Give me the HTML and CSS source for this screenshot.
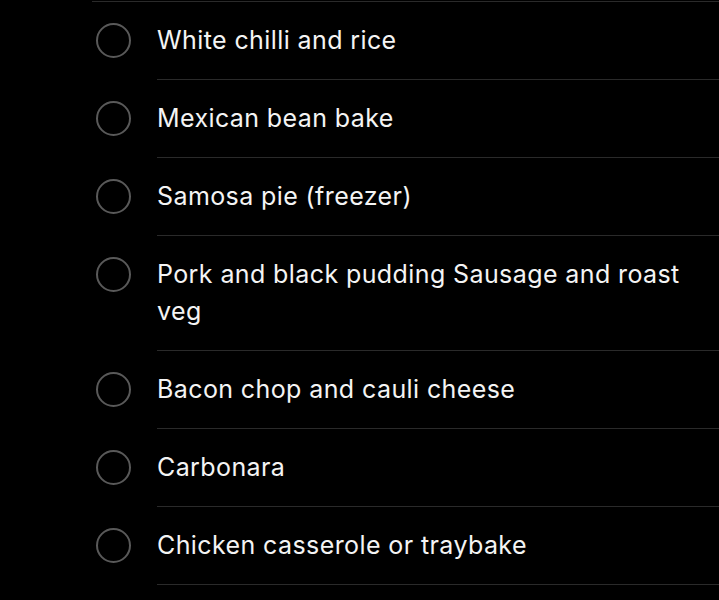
FILE: index.html
```html
<!DOCTYPE html>
<html lang="en">

<head>
    <meta charset="UTF-8">
    <meta name="viewport" content="width=device-width, initial-scale=1.0">
    <title>Meals</title>
    <link rel="stylesheet" href="styles.css">
</head>

<body>
    <div class="list-top"></div>

    <ul class="todo-list">
        <li class="todo-item">
            <span class="check"></span>
            <span class="todo-text">White chilli and rice</span>
        </li>
        <li class="todo-item">
            <span class="check"></span>
            <span class="todo-text">Mexican bean bake</span>
        </li>
        <li class="todo-item">
            <span class="check"></span>
            <span class="todo-text">Samosa pie (freezer)</span>
        </li>
        <li class="todo-item">
            <span class="check"></span>
            <span class="todo-text">Pork and black pudding Sausage and roast veg</span>
        </li>
        <li class="todo-item">
            <span class="check"></span>
            <span class="todo-text">Bacon chop and cauli cheese</span>
        </li>
        <li class="todo-item">
            <span class="check"></span>
            <span class="todo-text">Carbonara</span>
        </li>
        <li class="todo-item">
            <span class="check"></span>
            <span class="todo-text">Chicken casserole or traybake</span>
        </li>
    </ul>
</body>

</html>
```

FILE: styles.css
```css
body {
    margin: 0;
    background-color: #000;
    color: #f4f4f4;
    font-family: Inter, "Liberation Sans", Arial, sans-serif;
}

* {
    box-sizing: border-box;
}

.list-top {
    margin-top: 1px;
    margin-left: 92px;
    height: 1px;
    background-color: #2a2a2a;
}

.todo-list {
    margin: 0;
    padding: 0;
    list-style: none;
}

.todo-item {
    display: flex;
    align-items: flex-start;
}

.check {
    flex: none;
    width: 35px;
    height: 35px;
    margin: 21px 26px 0 96px;
    border: 2px solid #595959;
    border-radius: 50%;
}

.todo-text {
    flex: 1;
    padding: 20px 30px 20px 0;
    font-size: 25px;
    line-height: 37px;
    letter-spacing: 0.4px;
    border-bottom: 1px solid #2a2a2a;
}
```
